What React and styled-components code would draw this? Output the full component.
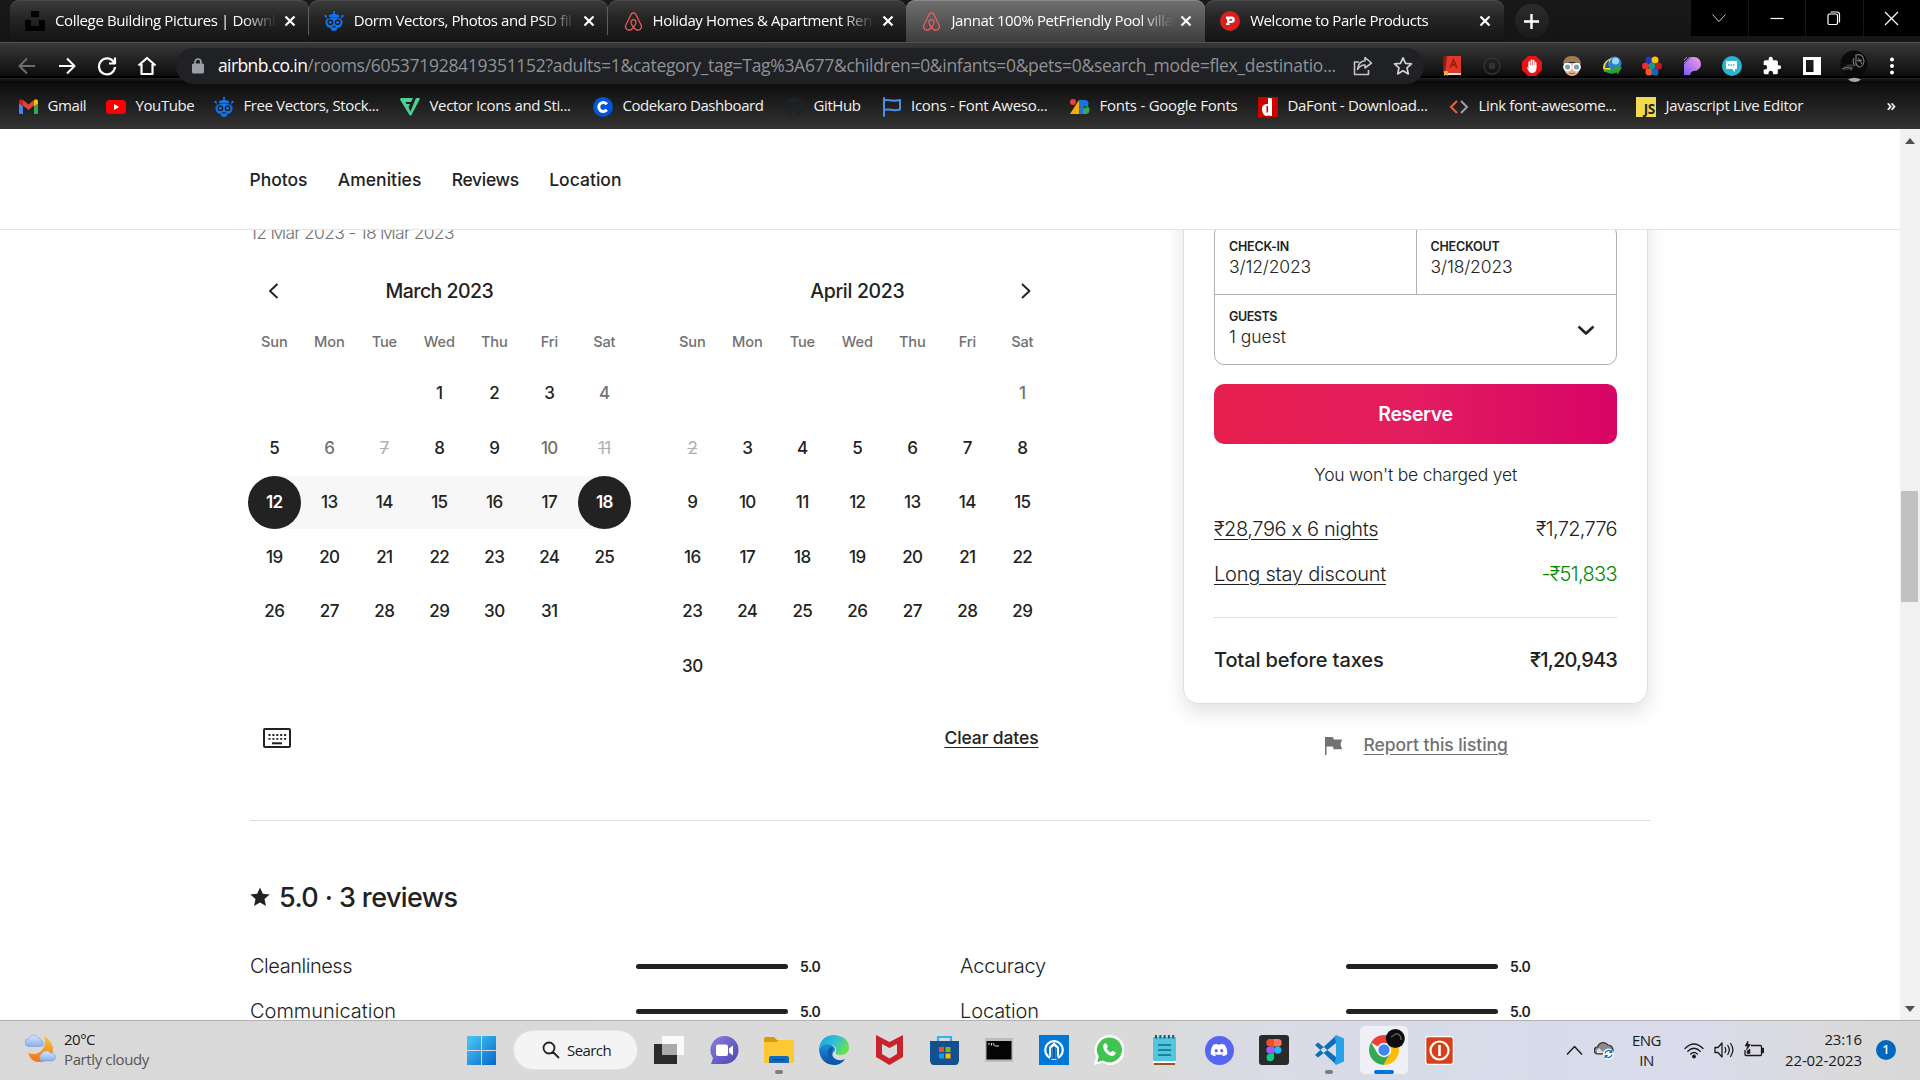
import React from "react";
import styled, { createGlobalStyle, css } from "styled-components";
import { FaAirbnb, FaGithub, FaDiscord, FaWhatsapp } from "react-icons/fa";

const GlobalStyle = createGlobalStyle`
  * { box-sizing: border-box; }
  html, body { margin: 0; padding: 0; overflow: hidden; }
  svg { display: block; flex: none; }
`;

const uiFont = `"Open Sans", "Noto Sans", sans-serif`;
const pageFont = `Inter, "Open Sans", sans-serif`;

const Screen = styled.div`
  width: 1920px;
  height: 1080px;
  display: flex;
  flex-direction: column;
  overflow: hidden;
  background: #fff;
  font-family: ${pageFont};
  font-feature-settings: "calt" 0;
  color: #222;
  white-space: nowrap;
`;

/* ---------- browser chrome ---------- */

const TabStrip = styled.div`
  height: 42px;
  flex: none;
  display: flex;
  padding-left: 10px;
  background: linear-gradient(#191919, #151515);
  font: 15px ${uiFont};
  color: #fff;
`;

const Tab = styled.div`
  width: 298.8px;
  height: 42px;
  flex: none;
  display: flex;
  align-items: center;
  padding-left: 15px;
  border-radius: 9px 9px ${(p) => (p.$active ? "0 0" : "9px 9px")};
  background: ${(p) =>
    p.$active
      ? "linear-gradient(#707070, #3d3d3d)"
      : "linear-gradient(#3d3d3d, #262626 40%, #131313)"};
  box-shadow: inset 0 1px ${(p) => (p.$active ? "#888" : "#4a4a4a")};
`;

const TabLabel = styled.span`
  width: 222px;
  margin: 0 6px 2px 10px;
  line-height: 24px;
  letter-spacing: ${(p) => p.$ls}px;
  mask-image: linear-gradient(to right, #000 ${(p) => (p.$fade ? "188px" : "222px")}, transparent 222px);
`;

const TabDivider = styled.i`
  width: 1px;
  height: 28px;
  margin: 7px 0 0 -1px;
  background: #5e5e5e;
`;

const NewTab = styled.div`
  width: 34px;
  height: 34px;
  margin: 4px 0 0 11px;
  border-radius: 50%;
  background: linear-gradient(#2c2c2c, #1b1b1b);
  display: grid;
  place-items: center;
`;

const WindowControls = styled.div`
  margin-left: auto;
  height: 36px;
  display: flex;
  gap: 1px;
`;

const WindowButton = styled.div`
  width: 56.5px;
  background: #000;
  display: grid;
  place-items: center;
`;

const Toolbar = styled.div`
  height: 42px;
  flex: none;
  display: flex;
  align-items: center;
  padding: 5px 0 0 7px;
  background: linear-gradient(#505050 0, #505050 1px, #383838 1px, #0d0d0d 34px, #000 34px, #000 36px, #292929 36px, #1a1a1a 37px, #080808 40px, #0b0b0b 42px);
`;

const Slot = styled.div`
  width: ${(p) => p.$w || 40}px;
  height: 36px;
  flex: none;
  display: grid;
  place-items: center;
`;

const Omnibox = styled.div`
  width: 1248px;
  height: 36px;
  margin: 0 8px 0 9px;
  padding: 0 1px 0 16px;
  border-radius: 18px;
  background: #202124;
  display: flex;
  align-items: center;
  font: 17.5px ${uiFont};
  color: #8f9194;
`;

const Url = styled.span`
  margin: 0 0 2px 14px;
  flex: 1;
  letter-spacing: -0.3px;
  line-height: 30px;
`;

const Host = styled.span`
  color: #fff;
  letter-spacing: -0.62px;
`;

const Bookmarks = styled.div`
  height: 45px;
  flex: none;
  display: flex;
  align-items: center;
  padding: 0 24px 0 18px;
  background: linear-gradient(#0e0e0e, #333);
  font: 15px ${uiFont};
  color: #f1f1f1;
`;

const Bookmark = styled.div`
  width: ${(p) => p.$w}px;
  flex: none;
  display: flex;
  align-items: center;
  gap: 9.5px;
  letter-spacing: ${(p) => p.$ls ?? -0.4}px;
`;

const BookmarkLabel = styled.span`
  padding-bottom: 3px;
`;

const More = styled.span`
  margin-left: auto;
  padding-bottom: 5px;
  font-weight: 600;
  font-size: 17px;
`;

const Icon20 = styled.span`
  width: 20px;
  height: 20px;
  flex: none;
  display: grid;
  place-items: center;
`;

/* ---------- page ---------- */

const Viewport = styled.div`
  height: 891px;
  flex: none;
  display: flex;
`;

const Page = styled.div`
  flex: 1;
  display: flex;
  flex-direction: column;
  overflow: hidden;
`;

const StickyNav = styled.nav`
  height: 101px;
  flex: none;
  display: flex;
  align-items: center;
  gap: 30.3px;
  padding: 0 0 0 249.6px;
  border-bottom: 1px solid #e4e4e4;
  font-size: 17.5px;
  font-weight: 500;
  position: relative;
  z-index: 1;
  background: #fff;
`;

const Spaced = styled.span`
  letter-spacing: ${(p) => p.$ls}px;
`;

const Content = styled.div`
  height: 621px;
  flex: none;
  margin-top: -30px;
  margin-left: 250px;
  width: 1400px;
  display: flex;
  justify-content: space-between;
  border-bottom: 1px solid #ddd;
`;

const DatesColumn = styled.section`
  width: 795px;
`;

const DateLine = styled.p`
  margin: 20px 0 26px;
  height: 24px;
  line-height: 25px;
  font-size: 17.5px;
  font-weight: 300;
  letter-spacing: -0.72px;
  color: #717171;
`;

const Calendars = styled.div`
  display: flex;
  gap: 33px;
  margin-left: -3.2px;
`;

const Month = styled.div`
  width: 385px;
`;

const MonthHead = styled.div`
  height: 41px;
  display: grid;
  grid-template-columns: 55px 1fr 55px;
  place-items: center;
`;

const MonthTitle = styled.h3`
  grid-column: 2;
  margin: 0;
  font-size: 19.5px;
  font-weight: 500;
  letter-spacing: ${(p) => p.$ls}px;
`;

const Arrow = styled.span`
  grid-column: ${(p) => (p.$right ? 3 : 1)};
  grid-row: 1;
  padding-left: ${(p) => (p.$right ? 7 : 0)}px;
`;

const Weekdays = styled.div`
  display: grid;
  grid-template-columns: repeat(7, 55px);
  height: 30px;
  margin: 16px 0 9.5px;
  line-height: 30px;
  text-align: center;
  font-size: 14.6px;
  font-weight: 500;
  letter-spacing: -0.15px;
  color: #717171;
`;

const Days = styled.div`
  display: grid;
  grid-template-columns: repeat(7, 55px);
  grid-auto-rows: 54.5px;
`;

const dayStates = {
  soft: css`
    color: #717171;
  `,
  off: css`
    color: #b0b0b0;
    font-weight: 400;
    text-decoration: line-through;
  `,
  edge: css`
    color: #fff;
    background: #222;
    border-radius: 50%;
    font-weight: 600;
  `,
};

const DayCell = styled.div`
  display: grid;
  place-items: center;
  background: ${(p) =>
    p.$range === "mid"
      ? "#f7f7f7"
      : p.$range === "start"
      ? "linear-gradient(to right, #fff 50%, #f7f7f7 50%)"
      : p.$range === "end"
      ? "linear-gradient(to right, #f7f7f7 50%, #fff 50%)"
      : "none"};
  background-size: 100% 53px;
  background-clip: content-box;
  padding: 0.75px 0;
`;

const Day = styled.span`
  width: 53px;
  height: 53px;
  line-height: 52px;
  text-align: center;
  font-size: 17px;
  font-weight: 500;
  letter-spacing: -0.6px;
  ${(p) => dayStates[p.$state]}
`;

const CalendarFooter = styled.div`
  display: flex;
  justify-content: space-between;
  align-items: center;
  width: 788.5px;
  height: 30px;
  margin-top: 29px;
  padding-left: 13px;
`;

const ClearDates = styled.a`
  font-size: 17.5px;
  font-weight: 500;
  letter-spacing: -0.12px;
  text-decoration: underline;
  text-underline-offset: 3px;
`;

const BookingColumn = styled.aside`
  width: 467px;
  margin-top: -60px;
  padding-right: 2.5px;
`;

const Card = styled.div`
  height: 564px;
  padding: 83px 29.5px 0 30px;
  border: 1px solid #ddd;
  border-radius: 15px;
  box-shadow: 0 7.5px 20px rgba(0, 0, 0, 0.12);
  display: flex;
  flex-direction: column;
`;

const FieldBox = styled.div`
  height: 141px;
  flex: none;
  display: grid;
  grid-template-columns: 1fr 1fr;
  grid-template-rows: 69px 1fr;
  border: 1px solid #b0b0b0;
  border-radius: 10px;
`;

const Field = styled.div`
  padding: 13px 21px 0 14px;
  border-left: ${(p) => (p.$divided ? "1px solid #b0b0b0" : "0")};
  border-top: ${(p) => (p.$wide ? "1px solid #b0b0b0" : "0")};
  grid-column: ${(p) => (p.$wide ? "1 / 3" : "auto")};
  display: flex;
  justify-content: space-between;
`;

const FieldLabel = styled.div`
  font-size: 12.5px;
  font-weight: 600;
  line-height: 18px;
  letter-spacing: ${(p) => p.$ls}px;
`;

const FieldValue = styled.div`
  margin-top: -1px;
  font-size: 17.5px;
  font-weight: 300;
  line-height: 24px;
  letter-spacing: ${(p) => p.$ls}px;
`;

const FieldChevron = styled.span`
  padding-top: 13px;
`;

const ReserveButton = styled.button`
  height: 60px;
  flex: none;
  margin: 19px 0 18px;
  border: 0;
  border-radius: 10px;
  background: linear-gradient(to right, #e61e4d 0%, #e31c5f 50%, #d70466 100%);
  color: #fff;
  font: 600 19.5px ${pageFont};
  letter-spacing: -0.35px;
`;

const Note = styled.div`
  height: 25px;
  line-height: 25px;
  text-align: center;
  font-size: 17.5px;
  font-weight: 300;
  letter-spacing: -0.21px;
  margin-bottom: 29.5px;
`;

const PriceRow = styled.div`
  height: 25px;
  line-height: 25px;
  display: flex;
  justify-content: space-between;
  margin-bottom: 20px;
  font-size: 20px;
  font-weight: 300;
`;

const PriceLabel = styled.span`
  text-decoration: underline;
  text-decoration-thickness: 1px;
  text-underline-offset: 3px;
  letter-spacing: ${(p) => p.$ls}px;
`;

const Amount = styled.span`
  letter-spacing: -0.66px;
  color: ${(p) => (p.$green ? "#008a05" : "inherit")};
`;

const TotalRow = styled.div`
  margin-top: 10.5px;
  padding-top: 29.5px;
  border-top: 1px solid #ddd;
  display: flex;
  justify-content: space-between;
  line-height: 25px;
  font-size: 20px;
  font-weight: 500;
`;

const Report = styled.div`
  margin: 29px 0 0 141.5px;
  display: flex;
  align-items: center;
  gap: 22px;
  line-height: 24px;
  font-size: 17.5px;
  font-weight: 500;
  letter-spacing: -0.06px;
  color: #717171;
`;

const ReportLink = styled.a`
  text-decoration: underline;
  text-underline-offset: 3px;
`;

const Reviews = styled.section`
  margin-left: 250px;
  width: 1400px;
  padding-top: 60px;
`;

const ReviewsTitle = styled.h2`
  display: flex;
  align-items: center;
  gap: 9px;
  height: 32px;
  margin: 0 0 41px;
  font-size: 27px;
  font-weight: 500;
  letter-spacing: -0.6px;
`;

const RatingGrid = styled.div`
  display: grid;
  grid-template-columns: 710px 690px;
  row-gap: 20px;
`;

const Rating = styled.div`
  display: flex;
  align-items: center;
  height: 25px;
  font-size: 20px;
  font-weight: 300;
`;

const RatingName = styled.span`
  width: 386px;
  padding-bottom: 2px;
  letter-spacing: ${(p) => p.$ls}px;
`;

const Meter = styled.span`
  width: 152px;
  height: 5px;
  margin-right: 12px;
  border-radius: 3px;
  background: #222;
`;

const Score = styled.span`
  padding-bottom: 1px;
  font-size: 14px;
  font-weight: 600;
  letter-spacing: -0.5px;
`;

const Scrollbar = styled.div`
  width: 20px;
  flex: none;
  display: flex;
  flex-direction: column;
  align-items: center;
  justify-content: space-between;
  padding: 9px 1px 8px 0;
  background: #f1f1f1;
`;

const Thumb = styled.div`
  width: 17px;
  height: 111px;
  margin-bottom: 58px;
  background: #c1c1c1;
`;

const Triangle = styled.i`
  border: 5px solid transparent;
  ${(p) =>
    p.$down
      ? "border-top: 6px solid #505050; border-bottom: 0;"
      : "border-bottom: 6px solid #505050; border-top: 0;"}
`;

/* ---------- taskbar ---------- */

const Taskbar = styled.footer`
  height: 60px;
  flex: none;
  display: flex;
  align-items: center;
  padding-bottom: 1px;
  border-top: 1px solid #b1b1b1;
  background: linear-gradient(to right, #d9d9d9 0, #dadada 1140px, #d9dbe6 1280px, #d6dce9 1480px, #dadbeb 1700px, #dadadb 1850px, #d8d8d8 1920px);
  font: 15px ${uiFont};
  color: #1b1b1b;
`;

const Weather = styled.div`
  width: 453.5px;
  flex: none;
  padding: 0 0 3px 25px;
  display: flex;
  gap: 8px;
  line-height: 20px;
  align-items: center;
`;

const Muted = styled.div`
  color: #555;
  letter-spacing: -0.38px;
`;

const AppSlot = styled.div`
  width: 55px;
  height: 58px;
  flex: none;
  display: grid;
  place-items: center;
  position: relative;
`;

const AppTile = styled.div`
  width: 48px;
  height: 48px;
  border-radius: 5px;
  display: grid;
  place-items: center;
  background: ${(p) => (p.$active ? "#eff0f6" : "none")};
`;

const RunMark = styled.i`
  position: absolute;
  bottom: 5px;
  left: calc(50% - ${(p) => (p.$active ? 10 : 4)}px);
  width: ${(p) => (p.$active ? 20 : 8)}px;
  height: 4px;
  border-radius: 2px;
  background: ${(p) => (p.$active ? "#0078d7" : "#7d7d7d")};
`;

const SearchPill = styled.div`
  width: 123px;
  height: 38px;
  flex: none;
  margin: 0 4.5px 0 5.5px;
  padding: 0 0 1px 28px;
  display: flex;
  align-items: center;
  gap: 7px;
  border-radius: 19px;
  background: #f4f4f4;
  box-shadow: 0 0 0 1px #e2e2e2;
  letter-spacing: -0.58px;
`;

const Tray = styled.div`
  flex: 1;
  display: flex;
  align-items: center;
  padding: 0 24px 0 99px;
  line-height: 20.5px;
`;

const Language = styled.div`
  width: 44px;
  margin: 0 15px 0 0;
  text-align: center;
  letter-spacing: -0.5px;
`;

const Status = styled.div`
  display: flex;
  gap: 10px;
  width: 82px;
`;

const Clock = styled.div`
  margin-left: auto;
  padding-bottom: 1px;
  text-align: right;
  letter-spacing: -0.13px;
`;

const Badge = styled.div`
  width: 20px;
  height: 20px;
  margin-left: 14px;
  border-radius: 50%;
  background: #0067c0;
  color: #fff;
  font-size: 12px;
  font-weight: 600;
  line-height: 20px;
  text-align: center;
`;

/* ---------- drawings ---------- */

const Stroke = ({ d, size = 20, w = 2, color = "#fff", box = 20, fill = "none", cap = "butt" }) => (
  <svg width={size} height={size} viewBox={`0 0 ${box} ${box}`} fill={fill} stroke={color} strokeWidth={w} strokeLinecap={cap} strokeLinejoin="round">
    <path d={d} />
  </svg>
);

const CloseX = () => <Stroke size={14} box={14} d="M2.5 2.5l9 9M11.5 2.5l-9 9" w={2.2} />;

const Unsplash = () => (
  <svg width="20" height="20" viewBox="0 0 20 20">
    <path fill="#000" d="M6 0h8v6H6zM0 9h6v6h8V9h6v11H0z" />
  </svg>
);

const Freepik = () => (
  <svg width="20" height="20" viewBox="0 0 20 20">
    <g fill="#1273eb">
      <path d="M9 0h2v1.500H9zM9.300 1h1.400v2H9.300zM4.500 4.500Q10 .8 15.500 4.500l-1 2h-9z" />
      <path d="M1.500 9.500Q10 3.500 18.500 9.500 19 15.500 15 16.800H5Q1 15.500 1.500 9.500z" />
      <path d="M6 16h8l-1.800 3.800H7.800z" />
      <circle cx="1.500" cy="5" r="1.200" />
      <circle cx="18.500" cy="5" r="1.200" />
    </g>
    <path d="M1.500 5l2.500 4M18.500 5L16 9" stroke="#1273eb" strokeWidth=".9" />
    <circle cx="6.400" cy="11.300" r="2.800" fill="#161616" />
    <circle cx="13.600" cy="11.300" r="2.800" fill="#161616" />
    <circle cx="6.400" cy="11.300" r="1.500" fill="#1273eb" />
    <circle cx="13.600" cy="11.300" r="1.500" fill="#1273eb" />
    <path d="M8 15.800h4" stroke="#161616" strokeWidth=".9" />
  </svg>
);

const Parle = () => (
  <svg width="20" height="20" viewBox="0 0 20 20">
    <circle cx="10" cy="10" r="10" fill="#dc1f1c" />
    <path fill="#fff" fillRule="evenodd" d="M6 5.500h5.500a3.300 3.300 0 0 1 0 6.600H9.500v2H6V12h1V8H6zM9.500 8v1.800h1.700a.9.900 0 0 0 0-1.800z" />
  </svg>
);

const Gmail = () => (
  <svg width="19" height="15" viewBox="0 0 19 15">
    <path fill="#4285f4" d="M0 3h4v12H1.500A1.500 1.500 0 0 1 0 13.500z" />
    <path fill="#34a853" d="M15 3h4v10.500a1.500 1.500 0 0 1-1.500 1.500H15z" />
    <path fill="#ea4335" d="M1 1.500L4 1l5.500 4.500L15 1v5.500L9.500 11 4 6.500 0 5z" />
    <path fill="#fbbc04" d="M15 1.200c2-1.800 4-.7 4 1.300v2L15 7z" />
    <path fill="#c5221f" d="M4 1.200C2-.6 0 .5 0 2.500v2L4 7z" />
  </svg>
);

const YouTube = () => (
  <svg width="20" height="14" viewBox="0 0 20 14">
    <rect width="20" height="14" rx="3.500" fill="#f00" />
    <path fill="#fff" d="M8 4l5 3-5 3z" />
  </svg>
);

const Flaticon = () => (
  <svg width="20" height="18" viewBox="0 0 20 18" fill="#4ad295">
    <path d="M0 1.500Q0 0 1.500 0H13l-2 4H5.500l1 2H10L8.500 9.500l2 4L15.500 1q.4-1 1.500-1h2q1.200 0 .7 1.300L11.500 17q-1 1.500-2 0z" />
  </svg>
);

const Codekaro = () => (
  <svg width="20" height="20" viewBox="0 0 20 20">
    <circle cx="10" cy="10" r="10" fill="#0056d6" />
    <path d="M13.800 7.200a4.500 4.500 0 1 0 0 5.600" fill="none" stroke="#fff" strokeWidth="3" />
  </svg>
);

const FlagLine = () => <Stroke d="M2 1v18M2 3.500c4-2 7 2 16-.5v9.500c-7 2.500-11-1.500-16 .5" w={2} color="#4a90e8" cap="round" />;

const GoogleFonts = () => (
  <svg width="20" height="16" viewBox="0 0 20 16">
    <circle cx="3" cy="3" r="3" fill="#ea4335" />
    <path fill="#f9ab00" d="M9 1h4v14H0z" />
    <path fill="#1a73e8" d="M9 1h4v14H9z" />
    <path fill="#1a73e8" d="M13 1h2a3.500 3.500 0 0 1 0 7h-2z" />
    <path fill="#34a853" d="M13 7h2.500a4 4 0 0 1 0 8H13z" />
    <path fill="#0d652d" d="M13 7h2.500q1.500 0 2 1-2 2-4.500 1z" />
  </svg>
);

const DaFont = () => (
  <svg width="20" height="20" viewBox="0 0 20 20">
    <path fill="#c00" d="M0 0h20v20H0z" />
    <path fill="#fff" fillRule="evenodd" d="M10 1l4 .5V19l-4-.5-2 .5c-3-1-4-4-4-7s2-5.500 6-5zM8.500 9v6.500H10V9z" />
  </svg>
);

const CodeMark = () => (
  <svg width="20" height="14" viewBox="0 0 20 14" fill="none" strokeWidth="2">
    <path d="M8 1L2 7l6 6" stroke="#e8623c" />
    <path d="M12 1l6 6-6 6" stroke="#9aa0a6" />
  </svg>
);

const JsBox = styled.span`
  width: 20px;
  height: 20px;
  padding-right: 1px;
  background: #f0db4f;
  color: #222;
  font: 700 13.5px/24px ${uiFont};
  letter-spacing: -0.3px;
  text-align: right;
`;

const AbpHand = () => (
  <svg width="20" height="20" viewBox="0 0 20 20">
    <path fill="#ed1111" d="M6 0h8l6 6v8l-6 6H6l-6-6V6z" />
    <path d="M7.200 11V6M9.400 10V4M11.600 10V4.500M13.600 11V6.500" stroke="#fff" strokeWidth="1.700" strokeLinecap="round" />
    <path fill="#fff" d="M6.400 9h8v4q-.5 4-4.500 4-3 0-5-5.500 1-1 2.500 1z" />
  </svg>
);

const DictBook = () => (
  <svg width="18" height="20" viewBox="0 0 18 20">
    <path fill="#8e1a12" d="M0 2q0-2 2-2h2v17H0z" />
    <path fill="#e0372b" d="M4 0h14v17H2z" />
    <path fill="#ddd" d="M2 17h16v2H2z" />
    <path fill="none" stroke="#a01d14" strokeWidth="1.800" d="M7 12l3.500-8L14 12M8.500 9h4" />
    <path fill="#f5b324" d="M1 15h4v5l-2-1.500L1 20z" />
  </svg>
);

const RecordStop = () => (
  <svg width="18" height="18" viewBox="0 0 18 18">
    <circle cx="9" cy="9" r="8" fill="none" stroke="#333" strokeWidth="1.500" />
    <path fill="#333" d="M6 6h6v6H6z" />
  </svg>
);

const GogglesFace = () => (
  <svg width="20" height="20" viewBox="0 0 20 20">
    <path fill="#e8b48c" d="M2 7h16v6q-2 7-8 7t-8-7z" />
    <path fill="#a07c50" d="M1 9q0-9 9-9t9 9l-3-3H4z" />
    <circle cx="5.500" cy="11" r="3.500" fill="#6fa5b5" stroke="#fff" strokeWidth="1.800" />
    <circle cx="14.500" cy="11" r="3.500" fill="#6fa5b5" stroke="#fff" strokeWidth="1.800" />
    <path d="M7 17q3 1.500 6 0" stroke="#b3473a" fill="none" />
  </svg>
);

const IdmGlobe = () => (
  <svg width="20" height="20" viewBox="0 0 20 20">
    <circle cx="12.500" cy="7.500" r="7" fill="#2d7fd3" />
    <circle cx="13.500" cy="5" r="3.500" fill="#a4d1f7" />
    <path fill="#f5d928" d="M1 11Q2 4 10 2q-4 4-3 8l2 4-6 2q-2-2-2-5z" />
    <path fill="#1d55a8" d="M3 12q0-5 4-8-1 5 1 8z" />
    <path fill="#2aa336" d="M1 13q5 1 8 .5 3-.5 4-2.500l-1-1.500 8 2-4.500 7-.8-2Q6 20 1 13z" />
  </svg>
);

const ColorCluster = () => (
  <svg width="20" height="20" viewBox="0 0 20 20">
    {[
      [7, 4, "#1d37c9"],
      [13, 4, "#ffc400"],
      [3.500, 10, "#ef2d2d"],
      [10, 10, "#0b9c94"],
      [16.500, 10, "#c61822"],
      [7, 16, "#ff5a1f"],
      [13, 16, "#1565c0"],
    ].map(([x, y, c]) => (
      <circle key={c} cx={x} cy={y} r="3.500" fill={c} />
    ))}
  </svg>
);

const PurpleP = () => (
  <svg width="18" height="20" viewBox="0 0 18 20">
    <defs>
      <linearGradient id="pp" x1="0" y1="1" x2="1" y2="0">
        <stop offset="0" stopColor="#7a5cff" />
        <stop offset="1" stopColor="#f4a3d8" />
      </linearGradient>
    </defs>
    <path fill="url(#pp)" d="M1 8l7-7h3a7 7 0 0 1 0 14q-3 0-4 4H1z" />
    <path d="M1 4l3-3M1 7l6-6" stroke="#b08cf0" strokeWidth="1" />
  </svg>
);

const ChatBubble = () => (
  <svg width="20" height="20" viewBox="0 0 20 20">
    <circle cx="10" cy="10" r="10" fill="#27b5d3" />
    <path fill="#fff" d="M4 5h11v8h-2v3l-3-3H4z" />
    <path d="M6 9h7" stroke="#27b5d3" strokeWidth="1.500" strokeDasharray="1.500 1" />
  </svg>
);

const Puzzle = () => (
  <svg width="20" height="20" viewBox="0 0 24 24" fill="#fff">
    <path d="M20.500 11H19V7a2 2 0 0 0-2-2h-4V3.500a2.500 2.500 0 0 0-5 0V5H4a2 2 0 0 0-2 2v3.800h1.500a2.700 2.700 0 0 1 0 5.400H2V20a2 2 0 0 0 2 2h3.800v-1.500a2.700 2.700 0 0 1 5.400 0V22H17a2 2 0 0 0 2-2v-4h1.500a2.500 2.500 0 0 0 0-5z" />
  </svg>
);

const SidePanel = () => (
  <svg width="18" height="18" viewBox="0 0 18 18">
    <path fill="#fff" fillRule="evenodd" d="M0 0h18v18H0zM3 3v12h7.500V3z" />
  </svg>
);

const Avatar = () => (
  <svg width="28" height="34" viewBox="0 0 28 34">
    <circle cx="14" cy="15" r="13.500" fill="#0a0a0a" />
    <path fill="#2d2d2d" d="M3 19q5-6 11-3l-2 6q-5-2-9 0z" />
    <path d="M16 6q7-2 8 6-1 6-5 6-4-2-3-7zM2 20q6-3 10 0M14 9q-2 4 1 8" fill="none" stroke="#777" strokeWidth="1.200" />
    <path d="M18 9l4 6M17 12l5-1" stroke="#aaa" strokeWidth=".8" />
    <path d="M8 30.500q6-3.500 13 0-6 5-13 0z" fill="#aaa" />
  </svg>
);

const Lock = () => (
  <svg width="12" height="16" viewBox="0 0 12 16">
    <path d="M3 6V4a3 3 0 0 1 6 0v2" fill="none" stroke="#9aa0a6" strokeWidth="1.700" />
    <rect y="5.500" width="12" height="10" rx="1.500" fill="#9aa0a6" />
  </svg>
);

const Keyboard = () => (
  <svg width="28" height="20" viewBox="0 0 28 20">
    <rect x="1" y="1" width="26" height="18" rx="1" fill="none" stroke="#222" strokeWidth="2" />
    <path d="M5.500 7h18M5.500 10.800h18" stroke="#222" strokeWidth="1.800" strokeDasharray="2 1.900" />
    <path d="M9 15.300h10" stroke="#222" strokeWidth="2" />
  </svg>
);

const ReportFlag = () => (
  <svg width="17" height="19" viewBox="0 0 17 19" fill="#717171">
    <path d="M0 1h8l.8 2.500H17l-1.500 4.700 1.500 5H8.500L8 10.500H1.500V19H0z" />
  </svg>
);

const Star = () => (
  <svg width="20" height="20" viewBox="0 0 20 20" fill="#222">
    <path d="M10 .5l2.800 6.200 6.900.7-5.200 4.700 1.500 7L10 15.600 4 19.100l1.500-7L.3 7.400l6.900-.7z" />
  </svg>
);

const WeatherIcon = () => (
  <svg width="31" height="30" viewBox="0 0 31 30">
    <defs>
      <linearGradient id="moon" x1="0" y1="0" x2="0" y2="1">
        <stop offset="0" stopColor="#f9c834" />
        <stop offset="1" stopColor="#ef7418" />
      </linearGradient>
      <linearGradient id="cld" x1="0" y1="0" x2="0" y2="1">
        <stop offset="0" stopColor="#dbe8fb" />
        <stop offset="1" stopColor="#86aeea" />
      </linearGradient>
    </defs>
    <path fill="url(#moon)" d="M19 2q10 6 9 16-3 10-14 10-8 0-11-9 9 3 14-3t2-14z" />
    <path fill="url(#cld)" stroke="#7c9fe0" strokeWidth=".6" d="M4 12.500a4 4 0 0 1 0-8 5 5 0 0 1 9-1 4 4 0 0 1 3 3 3 3 0 0 1-1 6z" />
    <path fill="url(#cld)" stroke="#7c9fe0" strokeWidth=".6" d="M17 27a4 4 0 0 1 0-7.500 5 5 0 0 1 8.500-.5 4 4 0 0 1 2 8z" />
  </svg>
);

const Windows = () => (
  <svg width="29" height="29" viewBox="0 0 29 29">
    <defs>
      <linearGradient id="win" x1="0" y1="0" x2="1" y2="1">
        <stop offset="0" stopColor="#4cc9f7" />
        <stop offset="1" stopColor="#0669c9" />
      </linearGradient>
    </defs>
    <path fill="url(#win)" d="M0 0h14v14H0zM15 0h14v14H15zM0 15h14v14H0zM15 15h14v14H15z" />
  </svg>
);

const TaskView = () => (
  <svg width="30" height="29" viewBox="0 0 30 29">
    <path fill="#2b2b2b" d="M0 8h23v20H0z" />
    <path fill="#fafafa" d="M8 0h22v19H8z" />
    <path fill="#aaa" d="M8 8h15v11H8z" />
  </svg>
);

const Teams = () => (
  <svg width="29" height="29" viewBox="0 0 29 29">
    <defs>
      <linearGradient id="tm" x1="0" y1="0" x2="1" y2="1">
        <stop offset="0" stopColor="#8a7fd8" />
        <stop offset="1" stopColor="#4b45b8" />
      </linearGradient>
    </defs>
    <path fill="url(#tm)" d="M14.500 0a14 14 0 0 1 0 28H1l2-6A14 14 0 0 1 14.500 0z" />
    <rect x="6" y="8.500" width="12" height="11.500" rx="2" fill="#fff" />
    <path fill="#fff" d="M19 12.500l4-3v10l-4-3z" />
  </svg>
);

const Folder = () => (
  <svg width="30" height="27" viewBox="0 0 30 27">
    <path fill="#d99a0b" d="M0 2q0-2 2-2h8l3 3h17v8H0z" />
    <path fill="#fcc934" d="M0 5h12l3-2h15v23H0z" />
    <path fill="#0f6cbd" d="M5 26v-5q0-2 2-2h16q2 0 2 2v5z" />
    <path fill="#084a8c" d="M9 22h12v1.500H9z" />
  </svg>
);

const Edge = () => (
  <svg width="30" height="30" viewBox="0 0 30 30">
    <defs>
      <linearGradient id="ed1" x1="0" y1="0" x2="1" y2=".4">
        <stop offset="0" stopColor="#1b9de2" />
        <stop offset=".6" stopColor="#35c1d0" />
        <stop offset="1" stopColor="#66e054" />
      </linearGradient>
      <linearGradient id="ed2" x1="0" y1="0" x2="0" y2="1">
        <stop offset="0" stopColor="#1b8fe0" />
        <stop offset="1" stopColor="#0c4f9e" />
      </linearGradient>
    </defs>
    <path fill="url(#ed1)" d="M0 14Q2 0 15 0q14 1 15 12 0 8-9 8-6 0-4-4 1-5-5-6Q4 9 0 14z" />
    <path fill="url(#ed2)" d="M0 14q4-6 11-4.500Q16 11 16 15q-6 6 1 11 5 2 9-2-4 6-11 6Q1 29 0 14z" />
    <path fill="#0d5cab" d="M11 12q-4 5-1 11 4 6 11 5 4-2 5-4-6 3-11-1-4-4-1-9 1-2-3-2z" />
  </svg>
);

const McAfee = () => (
  <svg width="27" height="30" viewBox="0 0 27 30">
    <path fill="#c8242c" d="M0 0l13.500 7L27 0v22l-13.500 8L0 22zM6 9v10l7.500 4.500L21 19V9l-7.500 4z" fillRule="evenodd" />
  </svg>
);

const Store = () => (
  <svg width="29" height="30" viewBox="0 0 29 30">
    <path d="M8 7V2h13v5" fill="none" stroke="#29b6f2" strokeWidth="2.200" />
    <path fill="#14508f" d="M0 6h29v19q0 5-4 5H4q-4 0-4-5z" />
    <path fill="#f25022" d="M9 12h5v5H9z" />
    <path fill="#7fba00" d="M15.500 12h5v5h-5z" />
    <path fill="#00a4ef" d="M9 18.500h5v5H9z" />
    <path fill="#ffb900" d="M15.500 18.500h5v5h-5z" />
  </svg>
);

const Terminal = () => (
  <svg width="28" height="24" viewBox="0 0 28 24">
    <path fill="#b9bdc1" d="M0 0h28v24H0z" />
    <path fill="#050505" d="M1.500 3h25v18.500h-25z" />
    <path d="M3 6h2M6.500 5v2.500M8 5l1.500 3M10 8h4" stroke="#ddd" fill="none" />
  </svg>
);

const BlueApp = () => (
  <svg width="30" height="30" viewBox="0 0 30 30">
    <path fill="#0078d7" d="M0 0h30v30H0z" />
    <circle cx="15" cy="15" r="8.800" fill="none" stroke="#fff" strokeWidth="2.200" />
    <path fill="#0078d7" d="M11 24v-9h8v9z" />
    <path fill="#fff" d="M10 20v-8l5-4.500 5 4.500v8l-2 2.500v-9l-1.500-1.500V24h-3V12L12 13.500v9z" />
    <path fill="#0a5aa5" d="M13.500 12.500l1.500-1.500 1.500 1.500V24h-3z" />
  </svg>
);

const Round = styled.span`
  width: 29px;
  height: 29px;
  border-radius: 50%;
  display: grid;
  place-items: center;
  background: ${(p) => p.$bg};
  border: ${(p) => (p.$ring ? "2px solid #fff" : "0")};
`;

const Handset = () => (
  <svg width="16" height="16" viewBox="0 0 16 16">
    <path fill="#fff" d="M3.500 1.500q1-.8 2 .3l1.300 2.400q.2.700-.4 1.300l-.8.9q1.500 2.800 4.300 4l1-1.200q.5-.5 1.100-.2l2.300 1.200q.7.500.4 1.400-.8 2.400-3.700 2.400Q3.500 12.500 2 5q0-2.300 1.500-3.500z" />
  </svg>
);

const WhatsAppRound = () => (
  <svg width="30" height="30" viewBox="0 0 30 30">
    <path fill="#fff" d="M15 0a15 15 0 1 1-6.500 28L0 30l2-8.500A15 15 0 0 1 15 0z" />
    <path fill="#3fc351" d="M15 2.400a12.500 12.500 0 1 1-6 23.200l-5.700 1.400 1.500-5.500A12.500 12.500 0 0 1 15 2.400z" />
    <g transform="translate(7 7)">
      <Handset />
    </g>
  </svg>
);

const Notepad = () => (
  <svg width="23" height="30" viewBox="0 0 23 30">
    <path fill="#53c6de" d="M0 2h23v25H0z" />
    <path d="M2 1.500h20" stroke="#0a5f7c" strokeWidth="4" strokeDasharray="2 2.300" />
    <path d="M5 10h13M5 15h13M5 20h13" stroke="#0a6c8a" strokeWidth="1.700" />
    <path fill="#fff" d="M0 26h23v2H0z" />
    <path fill="#9a5414" d="M1 28h21v2H1z" />
  </svg>
);

const Figma = () => (
  <svg width="30" height="30" viewBox="0 0 30 30">
    <rect width="30" height="30" rx="3" fill="#2a2a2a" />
    <path fill="#f24e1e" d="M15 4h-4a3.700 3.700 0 0 0 0 7.400h4z" />
    <path fill="#ff7262" d="M15 4h4a3.700 3.700 0 0 1 0 7.400h-4z" />
    <path fill="#a259ff" d="M15 11.400h-4a3.700 3.700 0 0 0 0 7.400h4z" />
    <circle cx="18.700" cy="15.100" r="3.700" fill="#1abcfe" />
    <path fill="#0acf83" d="M15 18.800h-4a3.700 3.700 0 1 0 4 3.700z" />
  </svg>
);

const VsCode = () => (
  <svg width="30" height="30" viewBox="0 0 30 30">
    <path fill="#0d6fb8" d="M1 10l3-2.500L22 22v7.500zM1 20l3 2.500L22 8V.5z" />
    <path fill="#29a0e8" d="M22 0l8 3.500v23L22 30l-1.500-1.500 1.500-6v-15l-1.500-6z" />
  </svg>
);

const Chrome = () => (
  <svg width="42" height="42" viewBox="-3 0 42 42">
    <path fill="#ea4335" d="M18 21l-13-7.500a15 15 0 0 1 26 0z" />
    <path fill="#fbbc04" d="M18 14h13.300A15 15 0 0 1 17.500 36L24 24.500z" />
    <path fill="#34a853" d="M5 13.500l6.700 11.200L18 28l-.5 8A15 15 0 0 1 5 13.500z" />
    <path fill="#34a853" d="M12 25l12-.5L17.500 36z" />
    <circle cx="18" cy="21" r="7.200" fill="#fff" />
    <circle cx="18" cy="21" r="5.700" fill="#4285f4" />
    <circle cx="29.300" cy="9.500" r="9.500" fill="#0d0d0d" />
    <path d="M29 5q6-1 6 6M25 8l5-3" stroke="#666" fill="none" strokeWidth="1.300" />
  </svg>
);

const RedApp = () => (
  <svg width="29" height="29" viewBox="0 0 29 29">
    <rect x=".7" y=".7" width="27.600" height="27.600" rx="2.500" fill="#d8401c" stroke="#fff" strokeWidth="1.200" />
    <circle cx="14.500" cy="14.500" r="9" fill="none" stroke="#fff" strokeWidth="2.200" />
    <path d="M14.500 9v11" stroke="#fff" strokeWidth="2.600" />
  </svg>
);

const CloudSync = () => (
  <svg width="20" height="20" viewBox="0 0 20 20">
    <path fill="#8a8a8a" stroke="#2d2d2d" strokeWidth="1.200" d="M4 14a3.500 3.500 0 0 1-.5-7A6 6 0 0 1 14 5q4 0 5 4.500V14z" />
    <path fill="#ddd" d="M3 13q-1-3 2-5l5 5z" />
    <circle cx="14.500" cy="14" r="5.500" fill="#fff" />
    <path d="M11 13.500a3.600 3.600 0 0 1 6.500-1.500M18 14.500a3.600 3.600 0 0 1-6.500 1.500M17.800 9.800v2.500h-2.500M11.200 18v-2.300h2.500" fill="none" stroke="#0067c0" strokeWidth="1.200" />
  </svg>
);

const Wifi = () => (
  <svg width="20" height="18" viewBox="0 0 20 18" fill="none" stroke="#1b1b1b" strokeWidth="1.300" strokeLinecap="round">
    <path d="M1 7.500q9-9 18 0M3.800 10.300q6.200-6 12.400 0M6.600 13q3.400-3 6.800 0" />
    <circle cx="10" cy="15.500" r="1.300" fill="#1b1b1b" />
  </svg>
);

const Speaker = () => (
  <svg width="20" height="18" viewBox="0 0 20 18" fill="none" stroke="#1b1b1b" strokeWidth="1.300" strokeLinejoin="round" strokeLinecap="round">
    <path d="M1 6.500h3l4-4.500v14l-4-4.500H1zM11 6.500q1.500 2.500 0 5M13.800 4.500q3 4.500 0 9M16.600 2.500q4.500 6.500 0 13" />
  </svg>
);

const Battery = () => (
  <svg width="20" height="18" viewBox="0 0 20 18" fill="none" stroke="#1b1b1b" strokeWidth="1.300">
    <path d="M7 4.500h9.500q1 0 1 1v8q0 1-1 1H2q-1 0-1-1V9" />
    <path d="M18 7.500h1.300v4H18z" fill="#1b1b1b" />
    <path d="M4 0L1 5h2.500L2.500 9 6.500 3.500H4z" fill="#1b1b1b" strokeWidth=".6" />
    <path d="M3 12.500V10l3-2v4.500z" fill="#1b1b1b" strokeWidth=".5" />
  </svg>
);

/* ---------- data ---------- */

const airbnbIcon = <FaAirbnb size={21} color="#ff5a5f" />;

const tabs = [
  { icon: <Unsplash />, label: "College Building Pictures | Downl", ls: -0.37, fade: true, divider: true },
  { icon: <Freepik />, label: "Dorm Vectors, Photos and PSD fil", ls: -0.44, fade: true, divider: true },
  { icon: airbnbIcon, label: "Holiday Homes & Apartment Ren", ls: -0.4, fade: true },
  { icon: airbnbIcon, label: "Jannat 100% PetFriendly Pool villa", ls: -0.4, fade: true, active: true },
  { icon: <Parle />, label: "Welcome to Parle Products", ls: -0.42 },
];

const bookmarks = [
  { icon: <Gmail />, label: "Gmail", w: 88 },
  { icon: <YouTube />, label: "YouTube", w: 108 },
  { icon: <Freepik />, label: "Free Vectors, Stock...", w: 186 },
  { icon: <Flaticon />, label: "Vector Icons and Sti...", w: 193, ls: -0.36 },
  { icon: <Codekaro />, label: "Codekaro Dashboard", w: 191, ls: -0.43 },
  { icon: <FaGithub size={20} color="#1c2229" />, label: "GitHub", w: 97.5 },
  { icon: <FlagLine />, label: "Icons - Font Aweso...", w: 188.500, ls: -0.27 },
  { icon: <GoogleFonts />, label: "Fonts - Google Fonts", w: 188, ls: -0.24 },
  { icon: <DaFont />, label: "DaFont - Download...", w: 191, ls: -0.3 },
  { icon: <CodeMark />, label: "Link font-awesome...", w: 187, ls: -0.36 },
  { icon: <JsBox>JS</JsBox>, label: "Javascript Live Editor", w: 170, ls: -0.3 },
];

const extensions = [DictBook, RecordStop, AbpHand, GogglesFace, IdmGlobe, ColorCluster, PurpleP, ChatBubble, Puzzle, SidePanel];

const weekdays = ["Sun", "Mon", "Tue", "Wed", "Thu", "Fri", "Sat"];

const months = [
  {
    title: "March 2023",
    ls: -0.55,
    offset: 3,
    count: 31,
    state: { 4: "soft", 6: "soft", 7: "off", 10: "soft", 11: "off", 12: "edge", 18: "edge" },
    range: { 12: "start", 13: "mid", 14: "mid", 15: "mid", 16: "mid", 17: "mid", 18: "end" },
  },
  { title: "April 2023", ls: -0.33, offset: 6, count: 30, state: { 1: "soft", 2: "off" }, range: {} },
];

const ratings = [
  ["Cleanliness", -0.46],
  ["Accuracy", -0.2],
  ["Communication", -0.01],
  ["Location", -0.1],
];

const apps = [
  { icon: <TaskView /> },
  { icon: <Teams /> },
  { icon: <Folder />, running: true },
  { icon: <Edge /> },
  { icon: <McAfee /> },
  { icon: <Store /> },
  { icon: <Terminal /> },
  { icon: <BlueApp /> },
  { icon: <WhatsAppRound /> },
  { icon: <Notepad /> },
  { icon: <Round $bg="#5865f2"><FaDiscord size={18} color="#fff" /></Round> },
  { icon: <Figma /> },
  { icon: <VsCode />, running: true },
  { icon: <Chrome />, active: true, running: true },
  { icon: <RedApp /> },
];

/* ---------- sections ---------- */

const BrowserChrome = () => (
  <>
    <TabStrip>
      {tabs.map((t) => (
        <React.Fragment key={t.label}>
          <Tab $active={t.active}>
            <Icon20>{t.icon}</Icon20>
            <TabLabel $ls={t.ls} $fade={t.fade}>{t.label}</TabLabel>
            <CloseX />
          </Tab>
          {t.divider && <TabDivider />}
        </React.Fragment>
      ))}
      <NewTab>
        <Stroke size={15} box={15} d="M7.500 0v15M0 7.500h15" w={2.400} />
      </NewTab>
      <WindowControls>
        <WindowButton><Stroke size={14} box={14} d="M.5 3.500L7 10.500l6.500-7" w={1} color="#ccc" /></WindowButton>
        <WindowButton><Stroke size={14} box={14} d="M.5 7.500h13" w={1.200} /></WindowButton>
        <WindowButton><Stroke size={14} box={14} d="M2.500 3h6.500q1.500 0 1.500 1.500V12q0 1.500-1.500 1.500H2.500Q1 13.500 1 12V4.500Q1 3 2.500 3zM3.500 1H10q2.500 0 2.500 2.500V11.500" w={1.200} /></WindowButton>
        <WindowButton><Stroke size={15} box={15} d="M1 1l13 13M14 1L1 14" w={1.200} /></WindowButton>
      </WindowControls>
    </TabStrip>
    <Toolbar>
      <Slot><Stroke d="M18 10H3M10 2.500L2.500 10l7.500 7.500" color="#6d6d6d" /></Slot>
      <Slot><Stroke d="M2 10h15M10 2.500l7.500 7.500-7.500 7.500" /></Slot>
      <Slot><Stroke d="M17 6.500A8 8 0 1 0 18 11M18 1.500v6h-6" w={2.200} /></Slot>
      <Slot><Stroke d="M1.500 9.500L10 2l8.500 7.500M4.500 8v10h11V8" w={2.200} /></Slot>
      <Omnibox>
        <Lock />
        <Url>
          <Host>airbnb.co.in</Host>
          /rooms/605371928419351152?adults=1&amp;category_tag=Tag%3A677&amp;children=0&amp;infants=0&amp;pets=0&amp;search_mode=flex_destinatio...
        </Url>
        <Slot><Stroke d="M6 6H1.500v12.500h14V14M12 1.500l6.500 5.500-6.500 5V9q-5 0-7.500 4.500Q5.500 5 12 4.700z" w={1.600} color="#c4c4c4" /></Slot>
        <Slot><Stroke d="M10 1.800l2.500 5.500 6 .6-4.500 4 1.300 6L10 14.800l-5.300 3.100 1.300-6-4.500-4 6-.6z" w={1.700} color="#d0d0d0" /></Slot>
      </Omnibox>
      {extensions.map((Ext, i) => (
        <Slot key={i}><Ext /></Slot>
      ))}
      <Slot $w={44}><Avatar /></Slot>
      <Slot $w={32}>
        <svg width="4" height="18" viewBox="0 0 4 18" fill="#fff">
          <circle cx="2" cy="2.500" r="2" />
          <circle cx="2" cy="9" r="2" />
          <circle cx="2" cy="15.500" r="2" />
        </svg>
      </Slot>
    </Toolbar>
    <Bookmarks>
      {bookmarks.map((b) => (
        <Bookmark key={b.label} $w={b.w} $ls={b.ls}>
          <Icon20>{b.icon}</Icon20>
          <BookmarkLabel>{b.label}</BookmarkLabel>
        </Bookmark>
      ))}
      <More>»</More>
    </Bookmarks>
  </>
);

const CalendarMonth = ({ title, ls, offset, count, state, range, right }) => (
  <Month>
    <MonthHead>
      <Arrow $right={right}>
        <Stroke size={16} box={16} d={right ? "M4 1l7.500 7L4 15" : "M11.500 1L4 8l7.500 7"} w={1.900} color="#222" />
      </Arrow>
      <MonthTitle $ls={ls}>{title}</MonthTitle>
    </MonthHead>
    <Weekdays>
      {weekdays.map((d) => (
        <span key={d}>{d}</span>
      ))}
    </Weekdays>
    <Days>
      {Array.from({ length: offset }, (_, i) => (
        <span key={`blank${i}`} />
      ))}
      {Array.from({ length: count }, (_, i) => i + 1).map((n) => (
        <DayCell key={n} $range={range[n]}>
          <Day $state={state[n]}>{n}</Day>
        </DayCell>
      ))}
    </Days>
  </Month>
);

const Booking = () => (
  <BookingColumn>
    <Card>
      <FieldBox>
        <Field>
          <div>
            <FieldLabel $ls={-0.22}>CHECK-IN</FieldLabel>
            <FieldValue $ls={-0.15}>3/12/2023</FieldValue>
          </div>
        </Field>
        <Field $divided>
          <div>
            <FieldLabel $ls={-0.21}>CHECKOUT</FieldLabel>
            <FieldValue $ls={-0.15}>3/18/2023</FieldValue>
          </div>
        </Field>
        <Field $wide>
          <div>
            <FieldLabel $ls={-0.44}>GUESTS</FieldLabel>
            <FieldValue $ls={-0.01}>1 guest</FieldValue>
          </div>
          <FieldChevron>
            <Stroke size={18} box={18} d="M1.500 5.500L9 12.500l7.500-7" w={2.600} color="#222" />
          </FieldChevron>
        </Field>
      </FieldBox>
      <ReserveButton>Reserve</ReserveButton>
      <Note>You won't be charged yet</Note>
      <PriceRow>
        <PriceLabel $ls={-0.37}>₹28,796 x 6 nights</PriceLabel>
        <Amount>₹1,72,776</Amount>
      </PriceRow>
      <PriceRow>
        <PriceLabel $ls={-0.22}>Long stay discount</PriceLabel>
        <Amount $green>-₹51,833</Amount>
      </PriceRow>
      <TotalRow>
        <Spaced $ls={-0.1}>Total before taxes</Spaced>
        <Spaced $ls={-0.8}>₹1,20,943</Spaced>
      </TotalRow>
    </Card>
    <Report>
      <ReportFlag />
      <ReportLink>Report this listing</ReportLink>
    </Report>
  </BookingColumn>
);

export default function App() {
  return (
    <Screen>
      <GlobalStyle />
      <BrowserChrome />
      <Viewport>
        <Page>
          <StickyNav>
            <Spaced $ls={-0.05}>Photos</Spaced>
            <Spaced $ls={0.05}>Amenities</Spaced>
            <Spaced $ls={-0.32}>Reviews</Spaced>
            <Spaced $ls={0.02}>Location</Spaced>
          </StickyNav>
          <Content>
            <DatesColumn>
              <DateLine>12 Mar 2023 - 18 Mar 2023</DateLine>
              <Calendars>
                {months.map((m, i) => (
                  <CalendarMonth key={m.title} {...m} right={i === 1} />
                ))}
              </Calendars>
              <CalendarFooter>
                <Keyboard />
                <ClearDates>Clear dates</ClearDates>
              </CalendarFooter>
            </DatesColumn>
            <Booking />
          </Content>
          <Reviews>
            <ReviewsTitle>
              <Star />
              5.0 · 3 reviews
            </ReviewsTitle>
            <RatingGrid>
              {ratings.map(([name, ls]) => (
                <Rating key={name}>
                  <RatingName $ls={ls}>{name}</RatingName>
                  <Meter />
                  <Score>5.0</Score>
                </Rating>
              ))}
            </RatingGrid>
          </Reviews>
        </Page>
        <Scrollbar>
          <Triangle />
          <Thumb />
          <Triangle $down />
        </Scrollbar>
      </Viewport>
      <Taskbar>
        <Weather>
          <WeatherIcon />
          <div>
            <Spaced $ls={-0.51}>20°C</Spaced>
            <Muted>Partly cloudy</Muted>
          </div>
        </Weather>
        <AppSlot><Windows /></AppSlot>
        <SearchPill>
          <Stroke size={18} box={18} d="M12.500 7A5.500 5.500 0 1 1 1.500 7a5.500 5.500 0 0 1 11 0zM11 11l6 6" w={1.800} color="#222" />
          Search
        </SearchPill>
        {apps.map((a, i) => (
          <AppSlot key={i}>
            <AppTile $active={a.active}>{a.icon}</AppTile>
            {a.running && <RunMark $active={a.active} />}
          </AppSlot>
        ))}
        <Tray>
          <Stroke size={17} box={17} d="M1 12.500l7.500-8 7.500 8" w={1.400} color="#1b1b1b" />
          <Slot $w={42}><CloudSync /></Slot>
          <Language>
            <div>ENG</div>
            <div>IN</div>
          </Language>
          <Status>
            <Wifi />
            <Speaker />
            <Battery />
          </Status>
          <Clock>
            <div>23:16</div>
            <div>22-02-2023</div>
          </Clock>
          <Badge>1</Badge>
        </Tray>
      </Taskbar>
    </Screen>
  );
}
